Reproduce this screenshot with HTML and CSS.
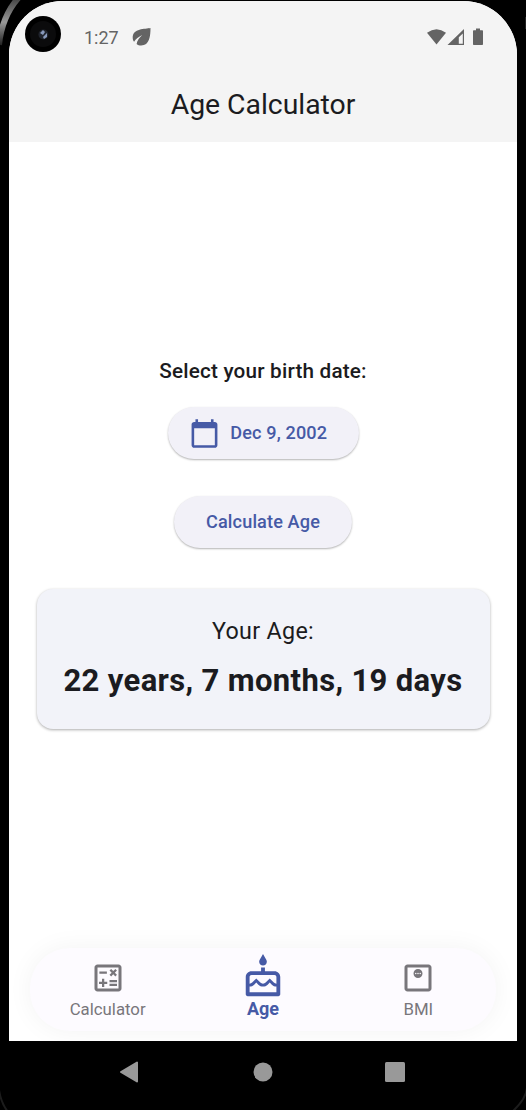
FILE: index.html
```html
<!DOCTYPE html>
<html lang="en">
<head>
<meta charset="utf-8">
<title>Age Calculator</title>
<link rel="stylesheet" href="styles.css">
</head>
<body>
<div class="device">
  <svg class="bezel" width="526" height="1110" viewBox="0 0 526 1110" fill="none">
    <defs><linearGradient id="rim" x1="0" y1="0" x2="0" y2="1"><stop offset="0" stop-color="#333"/><stop offset=".55" stop-color="#999"/><stop offset="1" stop-color="#222"/></linearGradient></defs>
    <path d="M-1 45Q2 14 22-6" stroke="url(#rim)" stroke-width="6"/>
    <path d="M-1 1090Q1 1103 8 1112M527 1088Q526 1099 512 1112" stroke="#1c1c1c" stroke-width="2"/>
    <path d="M525.500 17v12" stroke="#222"/>
  </svg>
  <div class="screen">
    <header class="header">
      <div class="status">
        <svg class="camera" width="36" height="36" viewBox="0 0 36 36">
          <circle cx="18" cy="18" r="18" fill="#000"/><circle cx="18" cy="18" r="13" fill="#0b0b0c"/>
          <circle cx="18.400" cy="18.500" r="5" fill="#20242d"/>
          <path d="M15 17l3-3 2 2-2 3zM18 21l4-4v4l-3 2z" fill="#8798bb"/>
        </svg>
        <span class="clock">1:27</span>
        <svg class="leaf" width="20" height="20" viewBox="0 0 20 20">
          <path d="M18.500 1C13 2 .7 1.500 .7 10.500c0 1.900.5 3.200 1.400 4.300C3.800 12 6.500 9.700 10.300 8 7.500 10.500 5.300 13.200 4.600 17c1.200 1.100 2.800 1.500 4.500 1.500C17.500 18.500 18.500 9 18.500 1z" fill="#646464"/>
        </svg>
        <svg class="signals" width="58" height="20" viewBox="0 0 58 20" fill="#646464">
          <path d="M0 4.800Q9.500-2.200 19 4.800L9.500 16.500z"/>
          <path fill-rule="evenodd" d="M37 1v16h-16.500zM35.800 5.500L31.800 9.300V15.700h4z"/>
          <path d="M49 .5h4v1.700h2c.6 0 1 .4 1 1V16c0 .6-.4 1-1 1h-8c-.6 0-1-.4-1-1V3.200c0-.6.4-1 1-1h2z"/>
        </svg>
      </div>
      <h1 class="title">Age Calculator</h1>
    </header>
    <main class="content">
      <p class="prompt">Select your birth date:</p>
      <button class="pill date">
        <svg width="31" height="31" viewBox="0 0 24 24" fill="#465aa6"><path d="M20 3h-1V1h-2v2H7V1H5v2H4c-1.100 0-2 .9-2 2v16c0 1.100.9 2 2 2h16c1.100 0 2-.9 2-2V5c0-1.100-.9-2-2-2zm0 18H4V8h16v13z"/></svg>
        <span>Dec 9, 2002</span>
      </button>
      <button class="pill calculate"><span>Calculate Age</span></button>
      <section class="result">
        <p class="caption">Your Age:</p>
        <p class="age">22 years, 7 months, 19 days</p>
      </section>
    </main>
    <nav class="tabs">
      <a class="tab">
        <svg width="36" height="36" viewBox="0 0 24 24" fill="#78767b"><path d="M19 3H5c-1.100 0-2 .9-2 2v14c0 1.100.9 2 2 2h14c1.100 0 2-.9 2-2V5c0-1.100-.9-2-2-2zm0 16H5V5h14v14z"/><path d="M6.250 7.720h5v1.500h-5zM13 15.750h5v1.500h-5zM13 13.250h5v1.500h-5zM8 18h1.500v-2h2v-1.500h-2v-2H8v2H6V16h2zM14.090 10.950l1.410-1.410 1.410 1.410 1.060-1.060-1.410-1.420 1.410-1.410L16.910 6 15.500 7.410 14.090 6l-1.060 1.060 1.410 1.410-1.410 1.420z"/></svg>
        <span>Calculator</span>
      </a>
      <a class="tab active">
        <svg width="46" height="46" viewBox="0 0 24 24" fill="#465aa6"><path d="M12 6c1.110 0 2-.9 2-2 0-.38-.1-.73-.29-1.030L12 0l-1.710 2.970c-.19.3-.29.65-.29 1.030 0 1.100.9 2 2 2zm6 3h-5V7h-2v2H6c-1.660 0-3 1.340-3 3v9c0 .55.45 1 1 1h16c.55 0 1-.45 1-1v-9c0-1.660-1.340-3-3-3zm1 11H5v-3c.9-.01 1.760-.37 2.400-1.010l1.090-1.070 1.070 1.070c1.310 1.310 3.590 1.300 4.890 0l1.080-1.070 1.070 1.070c.64.64 1.500 1 2.400 1.010v3zm0-4.500c-.51-.01-.99-.2-1.350-.57l-2.130-2.130-2.140 2.130c-.74.74-2.030.74-2.770 0L8.480 12.800l-2.140 2.130c-.35.36-.83.56-1.340.57V12c0-.55.45-1 1-1h12c.55 0 1 .45 1 1v3.500z"/></svg>
        <span>Age</span>
      </a>
      <a class="tab">
        <svg width="36" height="36" viewBox="0 0 24 24" fill="#78767b"><path d="M19 3H5c-1.100 0-2 .9-2 2v14c0 1.100.9 2 2 2h14c1.100 0 2-.9 2-2V5c0-1.100-.9-2-2-2zm0 16H5V5h14v14z"/><path fill-rule="evenodd" d="M12 6a3 3 0 1 0 0 6 3 3 0 0 0 0-6zM10.500 9.500a.5.500 0 1 1 0-1 .5.500 0 0 1 0 1zm1.500 0a.5.500 0 1 1 0-1 .5.500 0 0 1 0 1zm1.500 0a.5.500 0 1 1 0-1 .5.500 0 0 1 0 1z"/></svg>
        <span>BMI</span>
      </a>
    </nav>
  </div>
  <footer class="system">
    <svg width="20" height="22" viewBox="0 0 20 22"><path d="M18 1.500v19L2 11z" fill="#999" stroke="#999" stroke-width="2" stroke-linejoin="round"/></svg>
    <svg width="20" height="20" viewBox="0 0 20 20"><circle cx="11" cy="10" r="9.500" fill="#999"/></svg>
    <svg width="20" height="20" viewBox="0 0 20 20"><rect width="20" height="20" rx="1.500" fill="#999"/></svg>
  </footer>
</div>
</body>
</html>
```
FILE: styles.css
```css
* { box-sizing: border-box; }
body { margin: 0; font-family: Roboto, sans-serif; color: #1b1b20; }
p, h1 { margin: 0; }
svg { overflow: visible; }
.device { position: relative; width: 526px; height: 1110px; padding: 1px 9px 0; background: #000; overflow: hidden; }
.bezel { position: absolute; left: 0; top: 0; }
.screen { position: relative; display: flex; flex-direction: column; height: 1040px; background: #fff; border-radius: 54px 54px 0 0; overflow: hidden; }
.header { height: 141px; background: #f4f4f4; }
.status { display: flex; height: 66px; padding-left: 16px; align-items: center; }
.clock { margin: 7px 0 0 23px; width: 36px; font-size: 18px; line-height: 22px; color: #646464; white-space: nowrap; }
.leaf { margin: 6px 0 0 12px; }
.signals { margin: 7px 32px 0 auto; }
.title { font-size: 28.400px; line-height: 36px; margin-top: 20px; font-weight: 400; text-align: center; letter-spacing: -.03px; }
.content { display: flex; flex-direction: column; align-items: center; padding-top: 215px; flex: 1; }
.prompt { font-size: 20.700px; line-height: 28px; font-weight: 500; letter-spacing: .2px; }
.pill { display: flex; align-items: center; justify-content: center; height: 52px; border: 0; border-radius: 26px; background: #f2f1f8; color: #465aa6; font: 500 18.100px/26px Roboto, sans-serif; letter-spacing: .13px; box-shadow: 0 1px 2px rgba(0,0,0,.3); padding: 0; }
.date { width: 191px; gap: 10.500px; margin-top: 22px; padding-right: 10px; }
.calculate { width: 178px; margin-top: 36.500px; }
.result { width: 453px; height: 140px; margin-top: 41px; padding-top: 26px; border-radius: 16px; background: #f2f3f9; text-align: center; box-shadow: 0 1px 3px rgba(0,0,0,.33); }
.caption { font-size: 23.300px; line-height: 32px; letter-spacing: .3px; }
.age { font-size: 31px; line-height: 42px; margin-top: 13px; font-weight: 700; letter-spacing: .35px; white-space: nowrap; }
.tabs { display: flex; width: 466px; height: 83px; margin: 0 auto 10px 21px; border-radius: 40px; background: #fdfbff; box-shadow: 0 0 26px rgba(0,0,0,.05); }
.tab { flex: 1; display: flex; flex-direction: column; align-items: center; justify-content: flex-end; padding-bottom: 11.500px; font-size: 16.800px; line-height: 22px; color: #78767b; }
.tab svg { margin-bottom: 1.500px; }
.active { color: #465aa6; font-weight: 700; font-size: 18px; }
.active svg { margin-bottom: -2.500px; }
.system { display: flex; justify-content: space-between; align-items: center; height: 62px; padding: 0 112px 0 110px; }
```
